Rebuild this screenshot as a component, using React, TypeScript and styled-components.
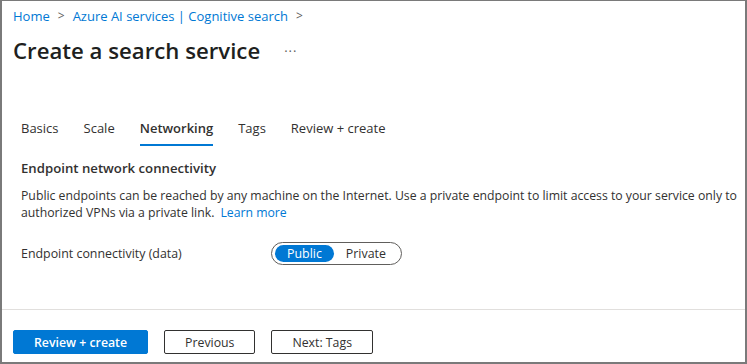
import styled, { createGlobalStyle } from "styled-components";

const GlobalStyle = createGlobalStyle`
    body {
        margin: 0;
        background: #ffffff;
        font-family: "Segoe UI", "Open Sans", "Liberation Sans", sans-serif;
        color: #323130;
    }
`;

const Frame = styled.div`
    box-sizing: border-box;
    width: 747px;
    height: 364px;
    border: 2px solid #7a7a7a;
    border-top-width: 1px;
    display: flex;
    flex-direction: column;
    background: #ffffff;
`;

const Header = styled.header`
    padding: 5px 11px 0;
`;

const Breadcrumb = styled.nav`
    display: flex;
    align-items: center;
    gap: 8px;
    font-size: 13px;
    line-height: 20px;
`;

const Crumb = styled.a`
    color: #0078d4;
    text-decoration: none;
`;

const Chevron = styled.span`
    color: #605e5c;
    font-size: 12px;
`;

const TitleRow = styled.div`
    display: flex;
    align-items: center;
    margin-top: 9px;
    gap: 24px;
`;

const Title = styled.h1`
    margin: 0;
    font-size: 22.2px;
    font-weight: 600;
    line-height: 32px;
    color: #201f1e;
`;

const More = styled.span`
    font-size: 13px;
    color: #605e5c;
    letter-spacing: 1px;
`;

const Content = styled.main`
    padding: 0 0 0 19px;
`;

const Tabs = styled.div`
    display: flex;
    gap: 25px;
    margin-top: 51px;
`;

const Tab = styled.div<{ $active?: boolean }>`
    font-size: 13px;
    line-height: 20px;
    padding-bottom: 6px;
    color: #323130;
    font-weight: ${(p) => (p.$active ? 600 : 400)};
    border-bottom: 2px solid ${(p) => (p.$active ? "#0078d4" : "transparent")};
`;

const SectionTitle = styled.h2`
    margin: 12px 0 0;
    font-size: 13.2px;
    font-weight: 600;
    line-height: 20px;
    color: #323130;
`;

const Text = styled.p`
    margin: 9px 0 0;
    font-size: 12.25px;
    line-height: 17px;
    color: #323130;
`;

const Link = styled.a`
    display: inline-block;
    color: #0078d4;
    text-decoration: none;
    margin-left: 6px;
`;

const FieldRow = styled.div`
    display: flex;
    align-items: center;
    margin-top: 21px;
`;

const Label = styled.div`
    width: 250px;
    font-size: 12.4px;
`;

const Toggle = styled.div`
    display: flex;
    align-items: center;
    box-sizing: border-box;
    height: 23px;
    padding: 2px 3px;
    border: 1px solid #605e5c;
    border-radius: 12px;
`;

const ToggleOption = styled.div<{ $on?: boolean }>`
    height: 17px;
    line-height: 17px;
    padding: 0 12px;
    border-radius: 9px;
    font-size: 12.4px;
    background: ${(p) => (p.$on ? "#0078d4" : "transparent")};
    color: ${(p) => (p.$on ? "#ffffff" : "#323130")};
`;

const Footer = styled.footer`
    margin-top: auto;
    border-top: 1px solid #e1dfdd;
    padding: 20px 11px 8px;
    display: flex;
    gap: 16px;
`;

const Button = styled.button<{ $primary?: boolean }>`
    box-sizing: border-box;
    height: 24px;
    padding: 0 20px;
    font-family: inherit;
    font-size: 12.3px;
    font-weight: ${(p) => (p.$primary ? 600 : 400)};
    border-radius: 2px;
    border: 1px solid ${(p) => (p.$primary ? "#0078d4" : "#323130")};
    background: ${(p) => (p.$primary ? "#0078d4" : "#ffffff")};
    color: ${(p) => (p.$primary ? "#ffffff" : "#323130")};
    cursor: pointer;
`;

export default function App() {
    return (
        <Frame>
            <GlobalStyle/>
            <Header>
                <Breadcrumb>
                    <Crumb href="#">Home</Crumb>
                    <Chevron>&gt;</Chevron>
                    <Crumb href="#">Azure AI services | Cognitive search</Crumb>
                    <Chevron>&gt;</Chevron>
                </Breadcrumb>
                <TitleRow>
                    <Title>Create a search service</Title>
                    <More>···</More>
                </TitleRow>
            </Header>

            <Content>
                {/*wizard steps*/}
                <Tabs>
                    <Tab>Basics</Tab>
                    <Tab>Scale</Tab>
                    <Tab $active>Networking</Tab>
                    <Tab>Tags</Tab>
                    <Tab>Review + create</Tab>
                </Tabs>

                <SectionTitle>Endpoint network connectivity</SectionTitle>
                <Text>
                    Public endpoints can be reached by any machine on the Internet. Use a private endpoint to limit access to your service only to authorized VPNs via a private link.
                    <Link href="#">Learn more</Link>
                </Text>

                <FieldRow>
                    <Label>Endpoint connectivity (data)</Label>
                    <Toggle>
                        <ToggleOption $on>Public</ToggleOption>
                        <ToggleOption>Private</ToggleOption>
                    </Toggle>
                </FieldRow>
            </Content>

            <Footer>
                <Button $primary>Review + create</Button>
                <Button>Previous</Button>
                <Button>Next: Tags</Button>
            </Footer>
        </Frame>
    );
}
